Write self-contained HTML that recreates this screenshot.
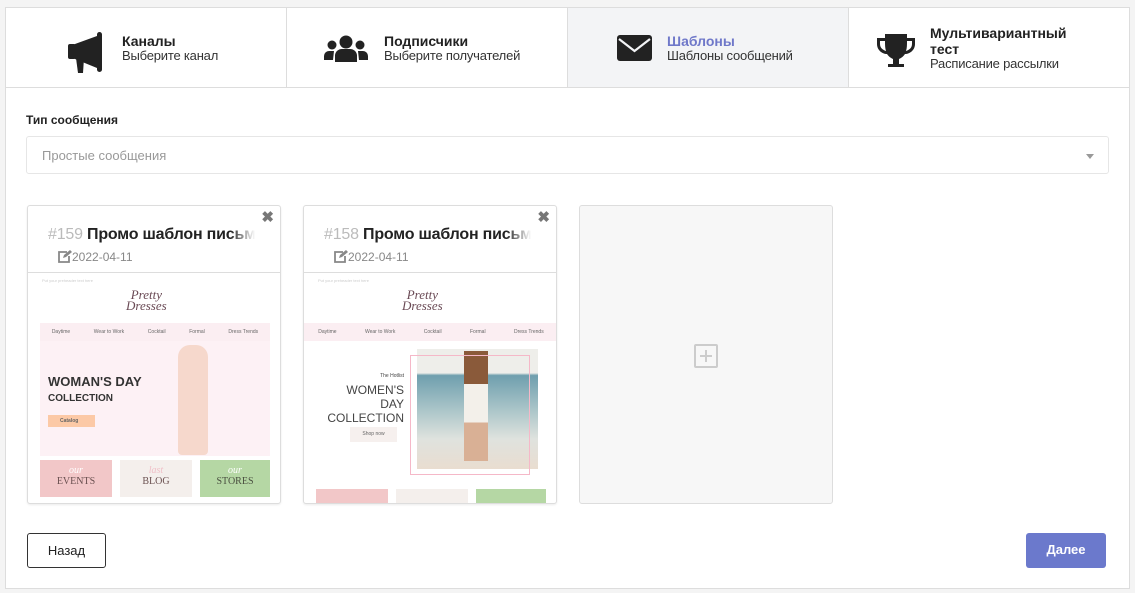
<!DOCTYPE html><html><head><meta charset="utf-8"><style>
*{box-sizing:border-box;margin:0;padding:0}
body{width:1135px;height:593px;background:#f4f4f4;font-family:"Liberation Sans",sans-serif;color:#222;position:relative;overflow:hidden}
.box{position:absolute;left:5px;top:7px;width:1125px;height:582px;background:#fff;border:1px solid #ddd}
.steps{position:absolute;left:0;top:0;width:1123px;height:80px;border-bottom:1px solid #ddd}
.step{position:absolute;top:0;height:79px;width:281px}
.step .ic{position:absolute}
.t{position:absolute;font-size:14px;font-weight:bold;color:#222;line-height:16px}
.s{position:absolute;font-size:13px;color:#333;line-height:16px;letter-spacing:-.2px}
.sep{position:absolute;top:0;width:1px;height:79px;background:#ddd}
.lbl{position:absolute;left:20px;top:105px;font-size:12px;font-weight:bold}
.sel{position:absolute;left:20px;top:128px;width:1083px;height:38px;border:1px solid #e6e6e6;border-radius:3px;font-size:13px;color:#999;padding:11px 15px}
.sel:after{content:"";position:absolute;right:14px;top:17px;border:4px solid transparent;border-top:5px solid #999}
.card{position:absolute;top:197px;width:254px;height:299px;border:1px solid #ddd;border-radius:3px;background:#fff;overflow:hidden;box-shadow:0 1px 2px rgba(0,0,0,.08)}
.ch{height:67px;border-bottom:1px solid #ddd;position:relative}
.ct{position:absolute;left:20px;top:20px;font-size:16px;font-weight:bold;white-space:nowrap;width:207px;overflow:hidden;letter-spacing:-.2px}
.ct span{color:#bbb;font-weight:normal}
.ct:after{content:"";position:absolute;right:0;top:0;width:25px;height:20px;background:linear-gradient(90deg,rgba(255,255,255,0),#fff)}
.cd{position:absolute;left:30px;top:44px;font-size:12px;color:#888}
.cd svg{vertical-align:-2px}
.x{position:absolute;right:6px;top:2px;font-size:15px;color:#777;font-weight:bold}
.btn{position:absolute;top:525px;height:35px;border-radius:3px;font-size:13px;text-align:center;line-height:33px}
</style></head><body>
<div class="box">
<div class="steps">
 <div class="step" style="left:0">
  <svg class="ic" style="left:62px;top:24px" width="36" height="42" viewBox="0 0 36 42"><rect x="0" y="12" width="8" height="15" rx="2" fill="#222"/><path d="M7 12L29 4V36L7 27z" fill="#222"/><rect x="29" y="0" width="5" height="40" rx="2.5" fill="#222"/><path d="M8 26h8l-1 15h-5z" fill="#222"/></svg>
  <div class="t" style="left:116px;top:25px">Каналы</div><div class="s" style="left:116px;top:40px">Выберите канал</div>
 </div>
 <div class="sep" style="left:280px"></div>
 <div class="step" style="left:281px">
  <svg class="ic" style="left:37px;top:27px" width="44" height="27" viewBox="0 0 44 27"><circle cx="22" cy="7" r="6.5" fill="#222"/><circle cx="8" cy="10" r="4.5" fill="#222"/><circle cx="36" cy="10" r="4.5" fill="#222"/><path d="M11 27v-7a7 7 0 0 1 7-6h8a7 7 0 0 1 7 6v7z M0 25v-4a5 5 0 0 1 5-5h5l-1 9z M44 25v-4a5 5 0 0 0-5-5h-5l1 9z" fill="#222"/></svg>
  <div class="t" style="left:97px;top:25px">Подписчики</div><div class="s" style="left:97px;top:40px">Выберите получателей</div>
 </div>
 <div class="sep" style="left:561px"></div>
 <div class="step" style="left:562px;background:#f3f4f6">
  <svg class="ic" style="left:49px;top:27px" width="35" height="26" viewBox="0 0 35 26"><rect width="35" height="26" rx="3" fill="#222"/><path d="M2 4l15.5 12L33 4" stroke="#f3f4f6" stroke-width="2.2" fill="none"/></svg>
  <div class="t" style="left:99px;top:25px;color:#6f78c9">Шаблоны</div><div class="s" style="left:99px;top:40px">Шаблоны сообщений</div>
 </div>
 <div class="sep" style="left:842px"></div>
 <div class="step" style="left:843px">
  <svg class="ic" style="left:28px;top:26px" width="38" height="37" viewBox="0 0 38 37"><path d="M8 0h22v4h8v6c0 6-5 10-10 10-2 3-4 4-6 5v5h5v3H11v-3h5v-5c-2-1-4-2-6-5C5 20 0 16 0 10V4h8z M3 7v3c0 4 3 6 6 7-1-3-1-6-1-10z M35 7v3c0 4-3 6-6 7 1-3 1-6 1-10z" fill="#222" fill-rule="evenodd"/></svg>
  <div class="t" style="left:81px;top:17px">Мультивариантный<br>тест</div><div class="s" style="left:81px;top:48px">Расписание рассылки</div>
 </div>
</div>
<div class="lbl">Тип сообщения</div>
<div class="sel">Простые сообщения</div>

<div class="card" style="left:21px">
 <div class="ch"><div class="ct"><span>#159</span> Промо шаблон письма</div><div class="cd"><svg width="14" height="13" viewBox="0 0 14 13"><path d="M9 2H1v10h10V6" stroke="#888" stroke-width="1.8" fill="none"/><path d="M5 8l1-3 6-5 2 2-6 5z" fill="#888"/></svg>2022-04-11</div><div class="x">✖</div></div>
 <div style="position:relative;height:232px;font-size:5px;color:#666">
  <div style="position:absolute;left:14px;top:5px;color:#ccc;font-size:4px">Put your preheader text here</div>
  <div style="position:absolute;left:98px;top:16px;font:italic 13px 'Liberation Serif',serif;color:#6a4a55;line-height:11px;text-align:center">Pretty<br>Dresses</div>
  <div style="position:absolute;left:12px;top:50px;width:230px;height:18px;background:#fbeef2;display:flex;justify-content:space-around;align-items:center">Daytime<span>Wear to Work</span><span>Cocktail</span><span>Formal</span><span>Dress Trends</span></div>
  <div style="position:absolute;left:12px;top:68px;width:230px;height:115px;background:#fdf1f5"></div>
  <div style="position:absolute;left:150px;top:72px;width:30px;height:110px;background:#f6d8cc;border-radius:12px 12px 4px 4px"></div>
  <div style="position:absolute;left:20px;top:101px;font-size:13px;font-weight:bold;color:#333;line-height:15px">WOMAN'S DAY<br><span style="font-size:10px">COLLECTION</span></div>
  <div style="position:absolute;left:20px;top:142px;width:47px;height:12px;background:#fcc9a6;font-size:5px;font-weight:bold;padding:3px 0 0 12px">Catalog</div>
  <div style="position:absolute;left:12px;top:187px;width:72px;height:37px;background:#f2c7c8;text-align:center;font:10px 'Liberation Serif',serif;color:#6a5050;padding-top:5px;line-height:11px"><i style="color:#fff">our</i><br>EVENTS</div>
  <div style="position:absolute;left:92px;top:187px;width:72px;height:37px;background:#f4efec;text-align:center;font:10px 'Liberation Serif',serif;color:#6a5050;padding-top:5px;line-height:11px"><i style="color:#f0c0c8">last</i><br>BLOG</div>
  <div style="position:absolute;left:172px;top:187px;width:70px;height:37px;background:#b5d7a4;text-align:center;font:10px 'Liberation Serif',serif;color:#4a5040;padding-top:5px;line-height:11px"><i style="color:#fff">our</i><br>STORES</div>
 </div>
</div>

<div class="card" style="left:297px">
 <div class="ch"><div class="ct"><span>#158</span> Промо шаблон письма</div><div class="cd"><svg width="14" height="13" viewBox="0 0 14 13"><path d="M9 2H1v10h10V6" stroke="#888" stroke-width="1.8" fill="none"/><path d="M5 8l1-3 6-5 2 2-6 5z" fill="#888"/></svg>2022-04-11</div><div class="x">✖</div></div>
 <div style="position:relative;height:232px;font-size:5px;color:#666">
  <div style="position:absolute;left:14px;top:5px;color:#ccc;font-size:4px">Put your preheader text here</div>
  <div style="position:absolute;left:98px;top:16px;font:italic 13px 'Liberation Serif',serif;color:#6a4a55;line-height:11px;text-align:center">Pretty<br>Dresses</div>
  <div style="position:absolute;left:0;top:50px;width:254px;height:18px;background:#fbeef2;display:flex;justify-content:space-around;align-items:center">Daytime<span>Wear to Work</span><span>Cocktail</span><span>Formal</span><span>Dress Trends</span></div>
  <div style="position:absolute;left:113px;top:76px;width:121px;height:120px;background:linear-gradient(#eeeeea 0 20%,#6f9fae 22%,#a9c4c8 50%,#dfe2de 75%,#e9ddd0)"></div>
  <div style="position:absolute;left:160px;top:78px;width:24px;height:110px;background:linear-gradient(#8a5a3a 0 30%,#f3f0ea 30% 65%,#d9b095 65%)"></div>
  <div style="position:absolute;left:106px;top:82px;width:120px;height:120px;border:1px solid #f5b8c8"></div>
  <div style="position:absolute;left:20px;top:93px;width:80px;text-align:right;font-size:12px;color:#444;line-height:14px"><span style="font-size:5px">The Hotlist</span><br>WOMEN'S<br>DAY<br>COLLECTION</div>
  <div style="position:absolute;left:46px;top:154px;width:47px;height:15px;background:#f6f0ee;text-align:center;line-height:15px">Shop now</div>
  <div style="position:absolute;left:12px;top:216px;width:72px;height:20px;background:#f2c7c8"></div>
  <div style="position:absolute;left:92px;top:216px;width:72px;height:20px;background:#f4efec"></div>
  <div style="position:absolute;left:172px;top:216px;width:70px;height:20px;background:#b5d7a4"></div>
 </div>
</div>

<div class="card" style="left:573px;background:#f7f7f7;box-shadow:none">
 <div style="position:absolute;left:114px;top:138px;width:24px;height:24px;border:2px solid #ccc;border-radius:2px"></div>
 <div style="position:absolute;left:120px;top:149px;width:12px;height:2px;background:#ccc"></div>
 <div style="position:absolute;left:125px;top:144px;width:2px;height:12px;background:#ccc"></div>
</div>

<div class="btn" style="left:21px;width:79px;border:1px solid #333;background:#fff">Назад</div>
<div class="btn" style="left:1020px;width:80px;background:#6b79cc;color:#fff;font-weight:bold">Далее</div>
</div>
</body></html>
